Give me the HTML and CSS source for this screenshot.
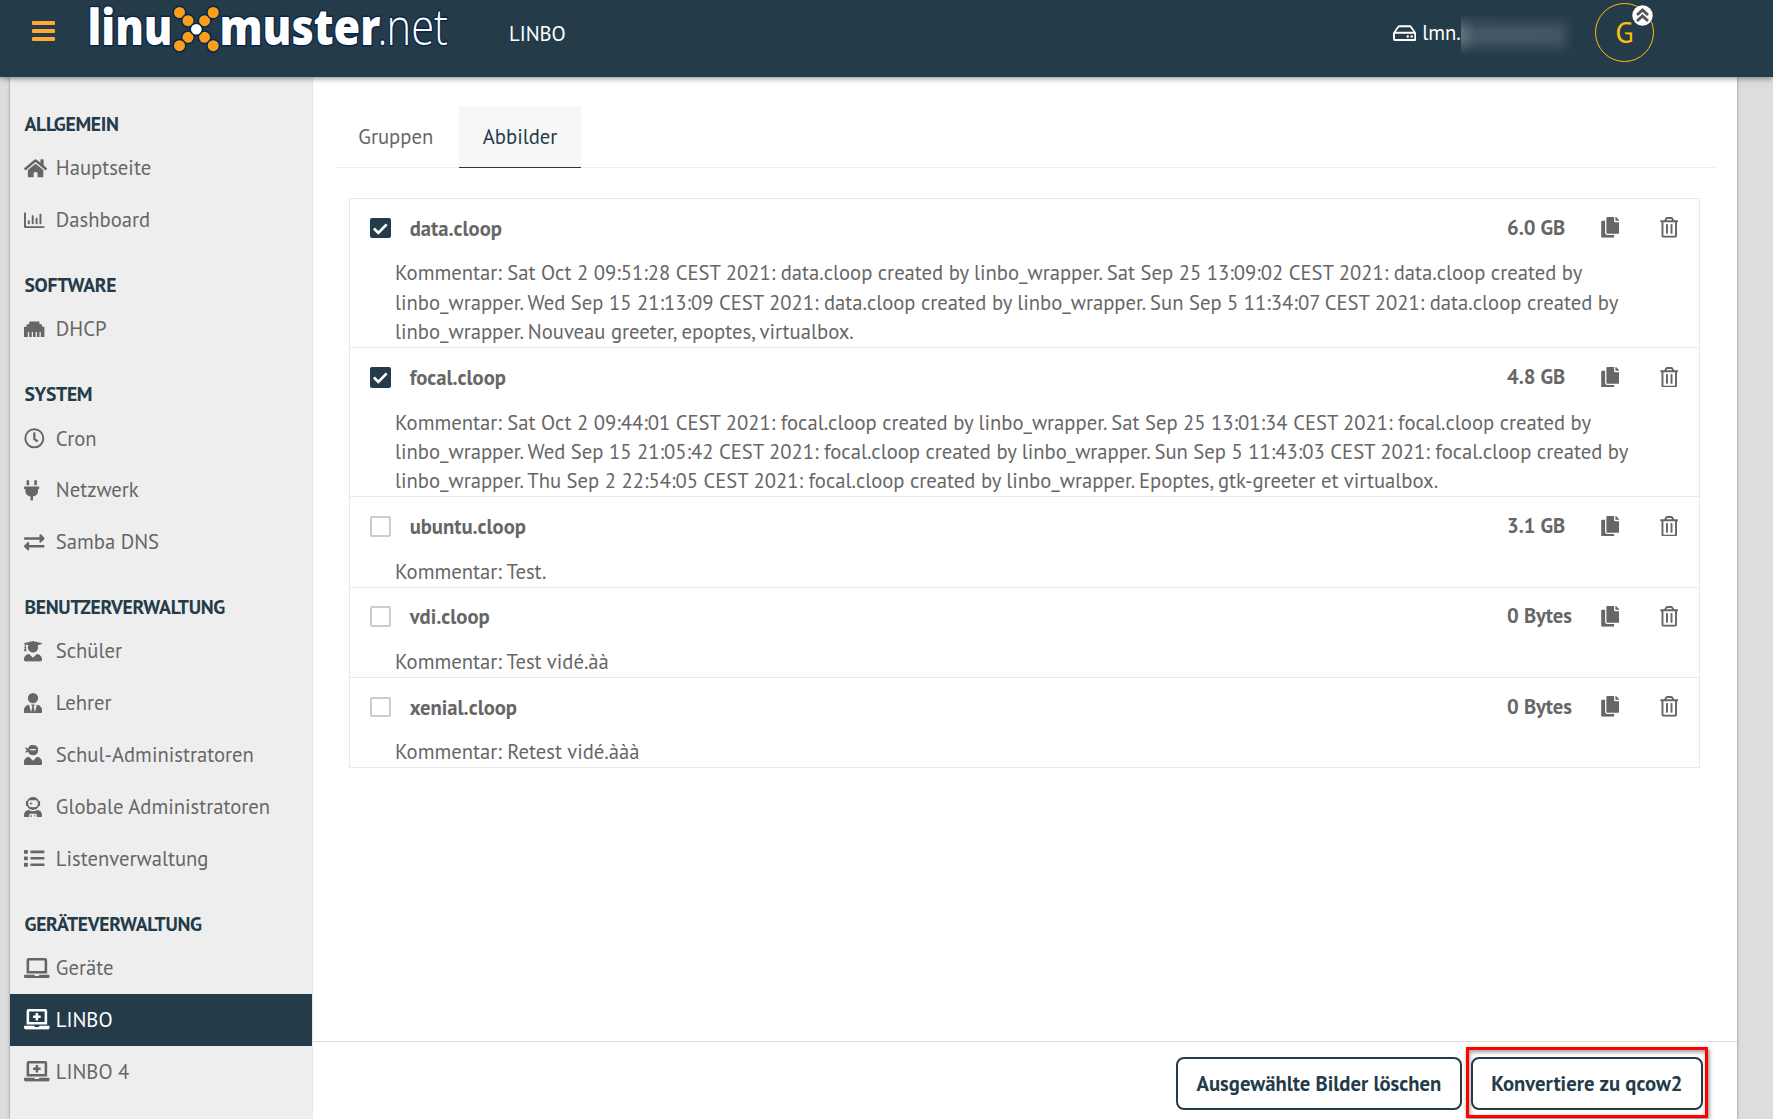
FILE: index.html
```html
<!DOCTYPE html>
<html lang="de">
<head>
<meta charset="utf-8">
<title>LINBO – linuxmuster.net</title>
<link rel="stylesheet" href="styles.css">
</head>
<body>
<svg class="defs" aria-hidden="true">
  <symbol id="home" viewBox="0 0 576 512"><path d="M280.4 148.300L96 300.100V464a16 16 0 0 0 16 16l112.100-.3a16 16 0 0 0 15.900-16V368a16 16 0 0 1 16-16h64a16 16 0 0 1 16 16v95.600a16 16 0 0 0 16 16.100L464 480a16 16 0 0 0 16-16V300L295.700 148.300a12.200 12.200 0 0 0-15.300 0zM571.600 251.500L488 182.600V44.100a12 12 0 0 0-12-12h-56a12 12 0 0 0-12 12v72.600L318.500 43a48 48 0 0 0-61 0L4.300 251.500a12 12 0 0 0-1.600 16.900l25.500 31a12 12 0 0 0 16.900 1.600L280.400 107.200a12.200 12.200 0 0 1 15.300 0L530.900 301a12 12 0 0 0 16.900-1.600l25.500-31a12 12 0 0 0-1.700-16.900z"/></symbol>
  <symbol id="chart" viewBox="0 0 512 512"><path d="M48 80a16 16 0 0 0-16-16H16A16 16 0 0 0 0 80v336a32 32 0 0 0 32 32h464a16 16 0 0 0 16-16v-16a16 16 0 0 0-16-16H48zM108 352h24a12 12 0 0 0 12-12v-72a12 12 0 0 0-12-12h-24a12 12 0 0 0-12 12v72a12 12 0 0 0 12 12zM204 352h24a12 12 0 0 0 12-12V140a12 12 0 0 0-12-12h-24a12 12 0 0 0-12 12v200a12 12 0 0 0 12 12zM300 352h24a12 12 0 0 0 12-12V204a12 12 0 0 0-12-12h-24a12 12 0 0 0-12 12v136a12 12 0 0 0 12 12zM396 352h24a12 12 0 0 0 12-12V108a12 12 0 0 0-12-12h-24a12 12 0 0 0-12 12v232a12 12 0 0 0 12 12z"/></symbol>
  <symbol id="ethernet" viewBox="0 0 512 512"><path d="M496 192h-48v-48a16 16 0 0 0-16-16h-48V80a16 16 0 0 0-16-16H144a16 16 0 0 0-16 16v48H80a16 16 0 0 0-16 16v48H16a16 16 0 0 0-16 16v224a16 16 0 0 0 16 16h80V320h32v128h64V320h32v128h64V320h32v128h64V320h32v128h80a16 16 0 0 0 16-16V208a16 16 0 0 0-16-16z"/></symbol>
  <symbol id="clock" viewBox="0 0 512 512"><path d="M256 8a248 248 0 1 0 0 496 248 248 0 0 0 0-496zm0 448a200 200 0 1 1 0-400 200 200 0 0 1 0 400zm61.800-104.400l-84.900-61.700a12.100 12.100 0 0 1-4.900-9.700V116a12 12 0 0 1 12-12h32a12 12 0 0 1 12 12v141.700l66.800 48.600a12 12 0 0 1 2.600 16.800l-18.800 25.900a12.100 12.100 0 0 1-16.800 2.600z"/></symbol>
  <symbol id="plug" viewBox="0 0 384 512"><path d="M320 32a32 32 0 0 0-64 0v96h64zm48 128H16a16 16 0 0 0-16 16v32a16 16 0 0 0 16 16h16v32a160 160 0 0 0 128 156.800V512h64v-99.200A160 160 0 0 0 352 256v-32h16a16 16 0 0 0 16-16v-32a16 16 0 0 0-16-16zM128 32a32 32 0 0 0-64 0v96h64z"/></symbol>
  <symbol id="exchange" viewBox="0 0 512 512"><path d="M0 168v-16a24 24 0 0 1 24-24h360V80c0-21.400 25.900-32 41-17l80 80a24 24 0 0 1 0 34l-80 80c-15 15-41 4.500-41-17v-48H24a24 24 0 0 1-24-24zm488 152H128v-48c0-21.300-25.900-32-41-17L7 335a24 24 0 0 0 0 34l80 80c15 15 41 4.500 41-17v-48h360a24 24 0 0 0 24-24v-16a24 24 0 0 0-24-24z"/></symbol>
  <symbol id="graduate" viewBox="0 0 448 512"><path d="M319.400 320.600L224 416l-95.400-95.400C57.100 323.700 0 382.200 0 454.400v9.600a48 48 0 0 0 48 48h352a48 48 0 0 0 48-48v-9.600c0-72.200-57.100-130.700-128.600-133.800zM13.600 79.800l6.400 1.500v58.400a21.300 21.300 0 0 0-11.600 18.300 20.900 20.900 0 0 0 11.100 17.900L3.900 238c-1.700 6.900 2.100 14 7.600 14h41.100c5.500 0 9.300-7.100 7.600-14l-15.600-62.100A20.900 20.900 0 0 0 56 158a21.300 21.300 0 0 0-12-18.300V87.100l66 15.900c-8.600 17.200-14 36.400-14 57a128 128 0 0 0 256 0c0-20.600-5.300-39.800-13.900-57l96.300-23.200c18.200-4.400 18.200-27.100 0-31.500L243.400 2.600a83.400 83.400 0 0 0-38.700 0L13.600 48.200c-18.100 4.400-18.100 27.200 0 31.600z"/></symbol>
  <symbol id="tie" viewBox="0 0 448 512"><path d="M224 256a128 128 0 1 0 0-256 128 128 0 0 0 0 256zm95.800 32.600L272 480l-32-136 32-56h-96l32 56-32 136-47.800-191.400C56.900 292 0 350.300 0 422.400V464a48 48 0 0 0 48 48h352a48 48 0 0 0 48-48v-41.600c0-72.100-56.900-130.400-128.200-133.800z"/></symbol>
  <symbol id="ninja" viewBox="0 0 448 512"><path d="M325.400 289.200L224 390.600 122.600 289.200C54 295.300 0 352.200 0 422.400V464a48 48 0 0 0 48 48h352a48 48 0 0 0 48-48v-41.600c0-70.200-54-127.100-122.600-133.200zM32 192c27.300 0 51.800-11.500 69.200-29.700A127.600 127.600 0 0 0 224 256a128 128 0 1 0-123.900-158.900C82.700 77.300 59 64 32 64c0 26.800 16.500 49.800 41.800 64C48.500 142.200 32 165.200 32 192zm144-96h96c17.700 0 32 14.300 32 32H144c0-17.700 14.300-32 32-32z"/></symbol>
  <symbol id="astronaut" viewBox="0 0 448 512"><path d="M64 224h13.500a160 160 0 0 0 293 0H384a16 16 0 0 0 16-16v-96a16 16 0 0 0-16-16h-13.500a160 160 0 0 0-293 0H64a16 16 0 0 0-16 16v96a16 16 0 0 0 16 16zm40-88a56 56 0 0 1 56-56h128a56 56 0 0 1 56 56v24a96 96 0 0 1-96 96h-48a96 96 0 0 1-96-96zm72 72l12-36 36-12-36-12-12-36-12 36-36 12 36 12zm151.600 113.400A191 191 0 0 1 224 352a191 191 0 0 1-103.600-30.600A134.400 134.400 0 0 0 0 454.400V464a48 48 0 0 0 48 48h80v-64a32 32 0 0 1 32-32h128a32 32 0 0 1 32 32v64h80a48 48 0 0 0 48-48v-9.600a134.400 134.400 0 0 0-120.400-133zM272 448a16 16 0 1 0 0 32 16 16 0 0 0 0-32zm-96 0a16 16 0 0 0-16 16v48h32v-48a16 16 0 0 0-16-16z"/></symbol>
  <symbol id="list" viewBox="0 0 512 512"><path d="M80 368H16a16 16 0 0 0-16 16v64a16 16 0 0 0 16 16h64a16 16 0 0 0 16-16v-64a16 16 0 0 0-16-16zm0-320H16A16 16 0 0 0 0 64v64a16 16 0 0 0 16 16h64a16 16 0 0 0 16-16V64a16 16 0 0 0-16-16zm0 160H16a16 16 0 0 0-16 16v64a16 16 0 0 0 16 16h64a16 16 0 0 0 16-16v-64a16 16 0 0 0-16-16zm416 176H176a16 16 0 0 0-16 16v32a16 16 0 0 0 16 16h320a16 16 0 0 0 16-16v-32a16 16 0 0 0-16-16zm0-320H176a16 16 0 0 0-16 16v32a16 16 0 0 0 16 16h320a16 16 0 0 0 16-16V80a16 16 0 0 0-16-16zm0 160H176a16 16 0 0 0-16 16v32a16 16 0 0 0 16 16h320a16 16 0 0 0 16-16v-32a16 16 0 0 0-16-16z"/></symbol>
  <symbol id="laptop" viewBox="0 0 640 512"><path d="M624 416H381.500c-.7 19.800-14.700 32-32.700 32H288c-18.700 0-33-17.500-32.800-32H16a16 16 0 0 0-16 16v16a64 64 0 0 0 64 64h512a64 64 0 0 0 64-64v-16a16 16 0 0 0-16-16zM576 48a48 48 0 0 0-48-48H112a48 48 0 0 0-48 48v336h512zm-64 272H128V64h384z"/></symbol>
  <symbol id="medical" viewBox="0 0 640 512"><path d="M624 416H381.500c-.7 19.800-14.700 32-32.700 32H288c-18.700 0-33-17.500-32.800-32H16a16 16 0 0 0-16 16v16a64 64 0 0 0 64 64h512a64 64 0 0 0 64-64v-16a16 16 0 0 0-16-16zM576 48a48 48 0 0 0-48-48H112a48 48 0 0 0-48 48v336h512zm-64 272H128V64h384zM232 224h56v56a8 8 0 0 0 8 8h48a8 8 0 0 0 8-8v-56h56a8 8 0 0 0 8-8v-48a8 8 0 0 0-8-8h-56v-56a8 8 0 0 0-8-8h-48a8 8 0 0 0-8 8v56h-56a8 8 0 0 0-8 8v48a8 8 0 0 0 8 8z"/></symbol>
  <symbol id="copy" viewBox="0 0 448 512"><path d="M320 448v40a24 24 0 0 1-24 24H24a24 24 0 0 1-24-24V120a24 24 0 0 1 24-24h72v296a56 56 0 0 0 56 56zm0-344V0H152a24 24 0 0 0-24 24v368a24 24 0 0 0 24 24h272a24 24 0 0 0 24-24V128H344a24 24 0 0 1-24-24zm121-31L375 7a24 24 0 0 0-17-7h-6v96h96v-6a24 24 0 0 0-7-17z"/></symbol>
  <symbol id="trash" viewBox="0 0 448 512"><path d="M268 416h24a12 12 0 0 0 12-12V188a12 12 0 0 0-12-12h-24a12 12 0 0 0-12 12v216a12 12 0 0 0 12 12zM432 80h-82.400l-34-56.700A48 48 0 0 0 274.400 0H173.600a48 48 0 0 0-41.200 23.300L98.400 80H16A16 16 0 0 0 0 96v16a16 16 0 0 0 16 16h16v336a48 48 0 0 0 48 48h288a48 48 0 0 0 48-48V128h16a16 16 0 0 0 16-16V96a16 16 0 0 0-16-16zM171.800 50.900a6 6 0 0 1 5.200-2.900h94a6 6 0 0 1 5.200 2.900L293.600 80H154.400zM368 464H80V128h288zM156 416h24a12 12 0 0 0 12-12V188a12 12 0 0 0-12-12h-24a12 12 0 0 0-12 12v216a12 12 0 0 0 12 12z"/></symbol>
  <symbol id="drive" viewBox="0 0 576 512"><path d="M567.400 235.600L462.300 78a48 48 0 0 0-40-21.400H153.700a48 48 0 0 0-40 21.400L8.600 235.600A48 48 0 0 0 0 262.200V400a48 48 0 0 0 48 48h480a48 48 0 0 0 48-48V262.200a48 48 0 0 0-8.600-26.600zM153.700 104.600h268.600L507.700 216H68.300zM528 400H48V264h480zM464 302a31 31 0 1 0 0 62 31 31 0 0 0 0-62zm-98 0a31 31 0 1 0 0 62 31 31 0 0 0 0-62z"/></symbol>
</svg>

<header class="topbar">
  <button class="burger" aria-label="Menü"><span></span><span></span><span></span></button>
  <svg class="logo" width="380" height="60" viewBox="80 0 380 60" role="img" aria-label="linuxmuster.net">
    <g class="logo-dots">
      <circle cx="179.500" cy="12.500" r="5.500"/><circle cx="188" cy="20.700" r="5.500"/>
      <circle cx="204.600" cy="20.700" r="5.500"/><circle cx="213.200" cy="12.500" r="5.500"/>
      <circle cx="188" cy="37.300" r="5.500"/><circle cx="179.500" cy="45.700" r="5.500"/>
      <circle cx="204.600" cy="37.300" r="5.500"/><circle cx="213.200" cy="45.700" r="5.500"/>
      <circle class="logo-hub" cx="196.300" cy="29.300" r="5.300"/>
    </g>
    <text class="logo-bold" x="87.500" y="45" textLength="85" lengthAdjust="spacingAndGlyphs">linu</text>
    <text class="logo-bold" x="219.500" y="45" textLength="161" lengthAdjust="spacingAndGlyphs">muster</text>
    <text class="logo-thin" x="380.500" y="45" textLength="70.500" lengthAdjust="spacingAndGlyphs" dx="-3 -1">.net</text>
  </svg>
  <span class="crumb">LINBO</span>
  <div class="host"><svg class="icon icon-drive"><use href="#drive"/></svg><span>lmn.</span><i class="redacted"></i></div>
  <div class="avatar">G
    <svg class="badge" viewBox="0 0 21 21"><circle cx="10.500" cy="10.500" r="10.200"/><path d="M5 10l5.500-5 5.500 5M5 16l5.500-5 5.500 5"/></svg>
  </div>
</header>

<div class="page">
  <nav class="sidebar">
    <h2>ALLGEMEIN</h2>
    <a><svg class="icon w-home"><use href="#home"/></svg>Hauptseite</a>
    <a><svg class="icon"><use href="#chart"/></svg>Dashboard</a>
    <h2>SOFTWARE</h2>
    <a><svg class="icon"><use href="#ethernet"/></svg>DHCP</a>
    <h2>SYSTEM</h2>
    <a><svg class="icon"><use href="#clock"/></svg>Cron</a>
    <a><svg class="icon w-plug"><use href="#plug"/></svg>Netzwerk</a>
    <a><svg class="icon"><use href="#exchange"/></svg>Samba DNS</a>
    <h2>BENUTZERVERWALTUNG</h2>
    <a><svg class="icon w-user"><use href="#graduate"/></svg>Schüler</a>
    <a><svg class="icon w-user"><use href="#tie"/></svg>Lehrer</a>
    <a><svg class="icon w-user"><use href="#ninja"/></svg>Schul-Administratoren</a>
    <a><svg class="icon w-user"><use href="#astronaut"/></svg>Globale Administratoren</a>
    <a><svg class="icon"><use href="#list"/></svg>Listenverwaltung</a>
    <h2>GERÄTEVERWALTUNG</h2>
    <a><svg class="icon w-laptop"><use href="#laptop"/></svg>Geräte</a>
    <a class="active"><svg class="icon w-laptop"><use href="#medical"/></svg>LINBO</a>
    <a><svg class="icon w-laptop"><use href="#medical"/></svg>LINBO 4</a>
  </nav>

  <main class="content">
    <div class="scroll">
      <div class="tabs"><a>Gruppen</a><a class="active">Abbilder</a></div>
      <div class="list">
        <section class="row">
          <div class="head"><span class="check on"><svg viewBox="0 0 21 21"><path d="M4 10.800l4.500 4.400L17 6.500"/></svg></span><b class="name">data.cloop</b><b class="size">6.0 GB</b><svg class="icon act"><use href="#copy"/></svg><svg class="icon act"><use href="#trash"/></svg></div>
          <p>Kommentar: Sat Oct 2 09:51:28 CEST 2021: data.cloop created by linbo_wrapper. Sat Sep 25 13:09:02 CEST 2021: data.cloop created by linbo_wrapper. Wed Sep 15 21:13:09 CEST 2021: data.cloop created by linbo_wrapper. Sun Sep 5 11:34:07 CEST 2021: data.cloop created by linbo_wrapper. Nouveau greeter, epoptes, virtualbox.</p>
        </section>
        <section class="row">
          <div class="head"><span class="check on"><svg viewBox="0 0 21 21"><path d="M4 10.800l4.500 4.400L17 6.500"/></svg></span><b class="name">focal.cloop</b><b class="size">4.8 GB</b><svg class="icon act"><use href="#copy"/></svg><svg class="icon act"><use href="#trash"/></svg></div>
          <p>Kommentar: Sat Oct 2 09:44:01 CEST 2021: focal.cloop created by linbo_wrapper. Sat Sep 25 13:01:34 CEST 2021: focal.cloop created by linbo_wrapper. Wed Sep 15 21:05:42 CEST 2021: focal.cloop created by linbo_wrapper. Sun Sep 5 11:43:03 CEST 2021: focal.cloop created by linbo_wrapper. Thu Sep 2 22:54:05 CEST 2021: focal.cloop created by linbo_wrapper. Epoptes, gtk-greeter et virtualbox.</p>
        </section>
        <section class="row">
          <div class="head"><span class="check"></span><b class="name">ubuntu.cloop</b><b class="size">3.1 GB</b><svg class="icon act"><use href="#copy"/></svg><svg class="icon act"><use href="#trash"/></svg></div>
          <p>Kommentar: Test.</p>
        </section>
        <section class="row">
          <div class="head"><span class="check"></span><b class="name">vdi.cloop</b><b class="size">0 Bytes</b><svg class="icon act"><use href="#copy"/></svg><svg class="icon act"><use href="#trash"/></svg></div>
          <p>Kommentar: Test vidé.àà</p>
        </section>
        <section class="row">
          <div class="head"><span class="check"></span><b class="name">xenial.cloop</b><b class="size">0 Bytes</b><svg class="icon act"><use href="#copy"/></svg><svg class="icon act"><use href="#trash"/></svg></div>
          <p>Kommentar: Retest vidé.ààà</p>
        </section>
      </div>
    </div>
    <footer class="actions">
      <button>Ausgewählte Bilder löschen</button>
      <div class="marked"><button>Konvertiere zu qcow2</button></div>
    </footer>
  </main>
</div>
</body>
</html>
```

FILE: styles.css
```css
* { box-sizing: border-box; }

body {
  margin: 0;
  height: 1119px;
  overflow: hidden;
  display: flex;
  flex-direction: column;
  background: #ddd;
  color: #666;
  font-family: "PT Sans", "Noto Sans", sans-serif;
  font-size: 20.650px;
  line-height: 29.430px;
}

button { font: inherit; margin: 0; }
.defs { display: none; }
.icon { width: 20.650px; height: 20.650px; fill: currentColor; flex: none; }

/* Top bar */
.topbar {
  position: relative;
  z-index: 2;
  flex: none;
  height: 77px;
  display: flex;
  align-items: flex-start;
  background: #243b4a;
  color: #fff;
  box-shadow: 0 1px 6px rgba(0, 0, 0, .5);
}
.burger {
  display: flex;
  flex-direction: column;
  gap: 4.200px;
  width: 23px;
  margin: 20.800px 25px 0 32px;
  padding: 0;
  border: 0;
  background: none;
}
.burger span { height: 4.100px; border-radius: 1px; background: #ffa834; }
.logo { flex: none; overflow: visible; }
.logo text { font-family: "Open Sans", sans-serif; fill: #fff; stroke: #08264a; stroke-width: 3px; paint-order: stroke; stroke-linejoin: round; }
.logo .logo-bold { font-size: 50px; font-weight: 800; }
.logo .logo-thin { font-size: 50px; font-weight: 300; }
.logo-dots circle { fill: #fb9e1b; stroke: #08264a; stroke-width: 3px; paint-order: stroke; }
.logo-dots .logo-hub { fill: #fff; }
.crumb { width: 884px; margin: 19px 0 0 49px; }
.host { display: flex; align-items: center; width: 202px; height: 30px; margin-top: 18px; }
.icon-drive { width: 23.200px; margin-right: 6px; }
.redacted { width: 114px; height: 42px; margin-top: 4px; background: linear-gradient(90deg, rgba(255,255,255,.28), rgba(255,255,255,.15) 12%, rgba(255,255,255,.14) 85%, transparent); -webkit-mask: linear-gradient(transparent, #000 42%, #000 58%, transparent); mask: linear-gradient(transparent, #000 42%, #000 58%, transparent); }
.avatar {
  position: relative;
  width: 59px;
  height: 59px;
  margin-top: 3px;
  border: 1px solid #ffc107;
  border-radius: 50%;
  color: #ffc107;
  font-size: 30px;
  line-height: 56px;
  text-align: center;
}
.badge { position: absolute; left: 36px; top: 1px; width: 21px; height: 21px; }
.badge circle { fill: #fff; }
.badge path { fill: none; stroke: #555; stroke-width: 2.800px; }

/* Page */
.page {
  flex: 1;
  min-height: 0;
  display: flex;
  margin: 0 36px 0 10px;
  background: #fff;
  box-shadow: 0 0 3px rgba(0, 0, 0, .4);
}

.sidebar { flex: none; width: 303px; padding-top: 8.050px; background: #eee; border-right: 1px solid #e8e8e8; overflow: hidden; }
.sidebar h2 {
  height: 57.200px;
  margin: 0;
  padding: 24.350px 0 0 14.500px;
  color: #243b4a;
  font-size: 19.650px;
  letter-spacing: -.3px;
}
.sidebar a { display: flex; align-items: center; height: 51.920px; padding-left: 14.300px; }
.sidebar .icon { margin-right: 10.900px; }
.sidebar .w-home { width: 23.200px; margin-right: 8.300px; }
.sidebar .w-plug { width: 15.450px; margin-right: 16.050px; }
.sidebar .w-user { width: 18px; margin-right: 13.500px; }
.sidebar .w-laptop { width: 25.750px; margin-right: 5.750px; }
.sidebar .active { background: #243b4a; color: #fff; }

/* Content */
.content { flex: 1; min-width: 0; display: flex; flex-direction: column; }
.scroll { flex: 1; padding: 29px 22px 0; }
.tabs { display: flex; gap: 3px; height: 62px; border-bottom: 1px solid #eee; }
.tabs a { height: 62px; padding: 16px 23.300px 0; border-bottom: 1px solid transparent; }
.tabs .active { background: #f7f7f7; color: #243b4a; border-color: #243b4a; }

.list { margin: 30px 15px 0 14px; border: 1px solid #e9e9e9; border-bottom: 0; }
.row { border-bottom: 1px solid #e9e9e9; padding: 0 60px 0 45px; }
.head { display: flex; align-items: center; height: 59.820px; margin: 0 -60px 0 -45px; padding: 0 21px 2.400px 20px; }
.head .check { margin: .8px 19.100px 0 0; }
.check { flex: none; width: 20.600px; height: 20.600px; border: 2px solid #ccc; border-radius: 2px; }
.check.on { border: 0; background: #243b4a; }
.check svg { display: block; width: 100%; height: 100%; fill: none; stroke: #fff; stroke-width: 2.800px; }
.name { flex: 1; padding-top: 2px; }
.size { width: 93.500px; }
.act { width: 18.500px; }
.act + .act { margin-left: 40.500px; }
.row p { margin: -.4px 0 .4px; }

.actions {
  flex: none;
  display: flex;
  align-items: flex-start;
  justify-content: flex-end;
  gap: 4px;
  height: 78px;
  padding: 5px 29px 0;
  border-top: 1px solid #ddd;
}
.actions button {
  height: 53px;
  padding: 0 18.500px;
  border: 2px solid #243b4a;
  border-radius: 8px;
  background: #fff;
  color: #243b4a;
  font-weight: 700;
  white-space: nowrap;
}
.actions > button { margin-top: 10px; }
.marked { padding: 7px 2px 5px; border: 3px solid #f00; box-shadow: 1px 2px 4px rgba(0, 0, 0, .5), inset 1px 2px 4px rgba(0, 0, 0, .4); }
```
